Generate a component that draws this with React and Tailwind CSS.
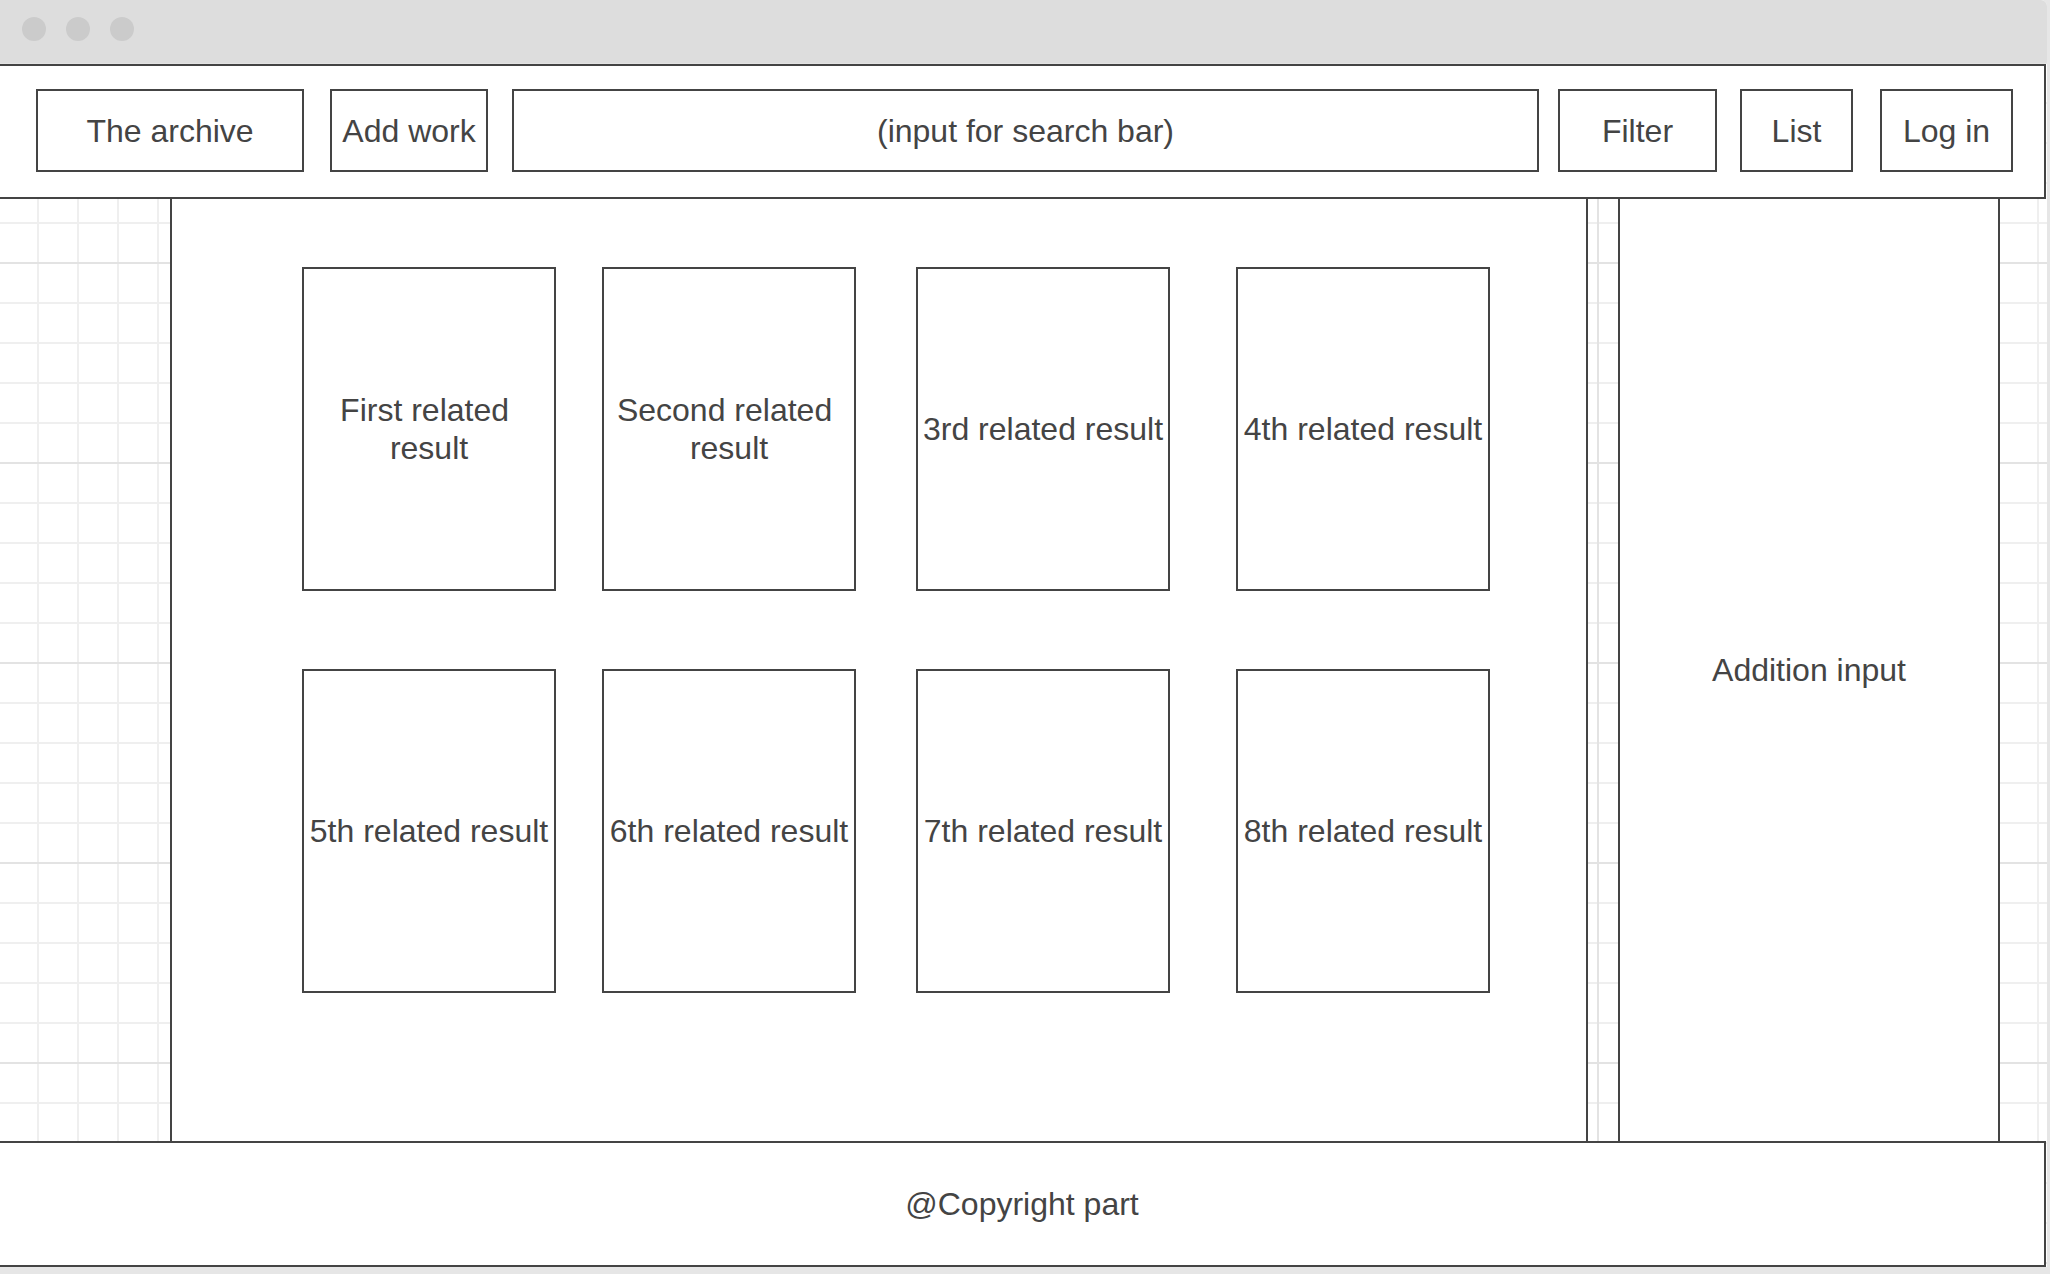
import React from 'react';

const navItems = [
  { id: 'archive', label: 'The archive', cls: 'ml-[36px] w-[268px]' },
  { id: 'add', label: 'Add work', cls: 'ml-[26px] w-[158px]' },
  { id: 'search', label: '(input for search bar)', cls: 'ml-[24px] w-[1027px]' },
  { id: 'filter', label: 'Filter', cls: 'ml-[19px] w-[159px]' },
  { id: 'list', label: 'List', cls: 'ml-[23px] w-[113px]' },
  { id: 'login', label: 'Log in', cls: 'ml-[27px] w-[133px]' },
];

// gaps between the cards are uneven in the mockup, so each gets its own margin
const colMargins = ['ml-0', 'ml-[46px]', 'ml-[60px]', 'ml-[66px]'];

const rows = [
  ['First related result', 'Second related result', '3rd related result', '4th related result'],
  ['5th related result', '6th related result', '7th related result', '8th related result'],
];

function ResultCard({ label, className }) {
  return (
    <div
      className={`flex h-[324px] w-[254px] shrink-0 items-center justify-center border-2 border-[#444] bg-white text-center ${className}`}
    >
      <span className="whitespace-break-spaces">{label}</span>
    </div>
  );
}

export default function App() {
  return (
    <div className="flex h-[1274px] w-[2050px] items-start overflow-hidden bg-[#e6e6e6] font-['Liberation_Sans',Arial,sans-serif] text-[32px] leading-[38px] text-[#444]">
      {/* window */}
      <div className="flex h-[1267px] w-[2047px] shrink-0 flex-col overflow-hidden rounded-tr-[6px] bg-white bg-[linear-gradient(to_right,#e3e3e3_2px,transparent_2px),linear-gradient(to_bottom,#e3e3e3_2px,transparent_2px),linear-gradient(to_right,#efefef_2px,transparent_2px),linear-gradient(to_bottom,#efefef_2px,transparent_2px)] bg-[length:200px_200px,200px_200px,40px_40px,40px_40px] bg-[position:197px_0,0_62px,37px_0,0_22px]">
        {/* title bar */}
        <div className="flex h-[63px] shrink-0 items-start gap-[20px] bg-[#dddddd] pl-[22px] pt-[17px]">
          <span className="h-[24px] w-[24px] rounded-full bg-[#cbcbcb]" />
          <span className="h-[24px] w-[24px] rounded-full bg-[#cbcbcb]" />
          <span className="h-[24px] w-[24px] rounded-full bg-[#cbcbcb]" />
        </div>
        <div className="h-[1px] shrink-0" />

        {/* header */}
        <header className="flex h-[135px] w-[2046px] shrink-0 items-start border-2 border-l-0 border-[#444] bg-white pt-[23px]">
          {navItems.map((item) => (
            <div
              key={item.id}
              className={`flex h-[83px] shrink-0 items-center justify-center border-2 border-[#444] ${item.cls}`}
            >
              {item.label}
            </div>
          ))}
        </header>

        {/* body */}
        <div className="flex h-[942px] shrink-0">
          <div className="w-[170px] shrink-0" />

          <main className="flex w-[1418px] shrink-0 flex-col gap-[78px] border-x-2 border-[#444] bg-white pl-[130px] pt-[68px]">
            {rows.map((row, r) => (
              <div key={r} className="flex">
                {row.map((label, i) => (
                  <ResultCard key={label} label={label} className={colMargins[i]} />
                ))}
              </div>
            ))}
          </main>

          <div className="w-[30px] shrink-0" />

          <aside className="flex w-[382px] shrink-0 items-center justify-center border-x-2 border-[#444] bg-white">
            Addition input
          </aside>
        </div>

        {/* footer */}
        <footer className="flex h-[126px] w-[2046px] shrink-0 items-center justify-center border-2 border-l-0 border-[#444] bg-white">
          @Copyright part
        </footer>
      </div>
    </div>
  );
}
